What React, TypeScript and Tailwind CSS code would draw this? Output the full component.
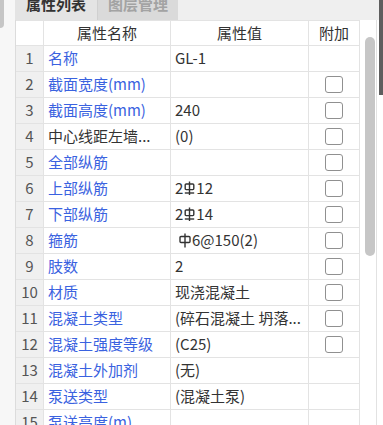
import React from "react";

type Row = {
  name: string;
  value: React.ReactNode;
  check: boolean;
  plain?: boolean;
};

function Hrb() {
  return (
    <svg width="11" height="15" viewBox="0 0 11 15" className="mx-[1px] inline-block align-[-2px]">
      <path d="M5.5 0.5V14" stroke="#333" strokeWidth="1.4" fill="none" />
      <rect x="1.2" y="3" width="8.6" height="5.6" rx="1" stroke="#333" strokeWidth="1.4" fill="none" />
      <path d="M0.8 12H10.2" stroke="#333" strokeWidth="1.4" fill="none" />
    </svg>
  );
}

function Hpb() {
  return (
    <svg width="12" height="15" viewBox="0 0 12 15" className="mr-[1px] inline-block align-[-2px]">
      <path d="M6 0.5V14.5" stroke="#333" strokeWidth="1.4" fill="none" />
      <rect x="1" y="3.5" width="10" height="6" rx="1" stroke="#333" strokeWidth="1.4" fill="none" />
    </svg>
  );
}

const rows: Row[] = [
  { name: "名称", value: "GL-1", check: false },
  { name: "截面宽度(mm)", value: "", check: true },
  { name: "截面高度(mm)", value: "240", check: true },
  { name: "中心线距左墙...", value: "(0)", check: true, plain: true },
  { name: "全部纵筋", value: "", check: true },
  { name: "上部纵筋", value: <>2<Hrb />12</>, check: true },
  { name: "下部纵筋", value: <>2<Hrb />14</>, check: true },
  { name: "箍筋", value: <span className="pl-[4px]"><Hpb />6@150(2)</span>, check: true },
  { name: "肢数", value: "2", check: true },
  { name: "材质", value: "现浇混凝土", check: true },
  { name: "混凝土类型", value: "(碎石混凝土 坍落...", check: true },
  { name: "混凝土强度等级", value: "(C25)", check: true },
  { name: "混凝土外加剂", value: "(无)", check: false },
  { name: "泵送类型", value: "(混凝土泵)", check: false },
  { name: "泵送高度(m)", value: "", check: false },
];

const cell = "h-[26px] border-b border-r border-[#e3e3e3] flex items-center";

export default function App() {
  return (
    <div
      className="flex h-[425px] w-[383px] overflow-hidden bg-white text-[15px] text-[#333]"
      style={{ fontFamily: '"Noto Sans CJK SC", "Noto Sans", sans-serif' }}
    >
      {/* left neighbour strip */}
      <div className="w-[15px] shrink-0 bg-[#f7f7f7]">
        <div className="h-[28px] w-[4px] rounded-br-[4px] bg-[#c6c6c6]" />
      </div>

      <div className="flex w-[364px] shrink-0 flex-col">
        {/* tabs */}
        <div className="flex h-[20px] shrink-0 items-start overflow-hidden bg-[#efefef]">
          <div className="flex h-[20px] w-[82px] justify-center bg-[#e4e4e4] font-bold text-[#333]">
            <span className="-mt-[6px] block leading-[20px]">属性列表</span>
          </div>
          <div className="flex h-[20px] w-[81px] justify-center border-l border-[#d0d0d0] bg-[#dadada] font-bold text-[#a3a3a3]">
            <span className="-mt-[6px] block leading-[20px]">图层管理</span>
          </div>
        </div>

        <div className="flex flex-1">
          {/* table */}
          <div className="w-[345px] shrink-0 border-l border-[#dcdcdc]">
            <div className="grid grid-cols-[28px_127px_138px_51px]">
              <div className={`${cell} border-t`} />
              <div className={`${cell} justify-center border-t`}>属性名称</div>
              <div className={`${cell} justify-center border-t`}>属性值</div>
              <div className={`${cell} justify-center border-t`}>附加</div>

              {rows.map((r, i) => (
                <React.Fragment key={i}>
                  <div className={`${cell} justify-center bg-[#f0f0f0] text-[#555]`}>{i + 1}</div>
                  <div className={`${cell} whitespace-nowrap pl-[4px] ${r.plain ? "text-[#333]" : "text-[#3a62e0]"}`}>
                    {r.name}
                  </div>
                  <div className={`${cell} overflow-hidden whitespace-nowrap pl-[4px]`}>{r.value}</div>
                  <div className={`${cell} justify-center`}>
                    {r.check && (
                      <div className="h-[17px] w-[18px] rounded-[3px] border border-[#909090] bg-white" />
                    )}
                  </div>
                </React.Fragment>
              ))}
            </div>
          </div>

          {/* scrollbar */}
          <div className="w-[16px] shrink-0 pl-[5px] pt-[17px]">
            <div className="h-[219px] w-[10px] rounded-full bg-[#c6c6c6]" />
          </div>
          <div className="w-[3px] shrink-0 border-l border-[#e2e2e2]" />
        </div>
      </div>

      <div className="h-[95px] w-[4px] shrink-0 bg-[#5e5e5e]" />
    </div>
  );
}
